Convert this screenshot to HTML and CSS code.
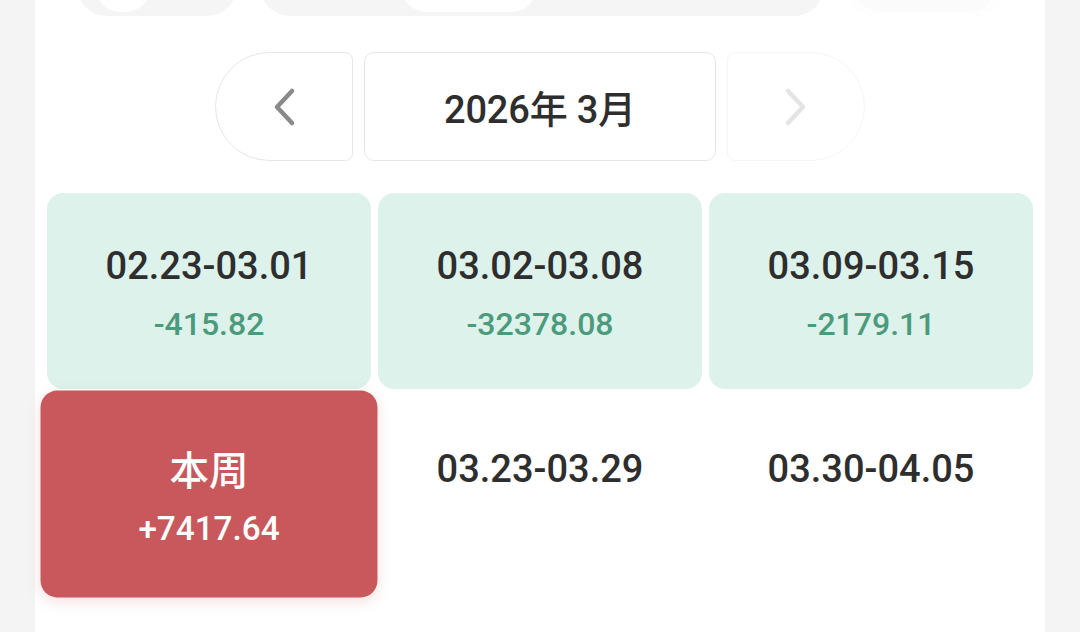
FILE: index.html
```html
<!DOCTYPE html>
<html lang="zh">
<head>
<meta charset="utf-8">
<title>周视图</title>
<link rel="stylesheet" href="styles.css">
</head>
<body>
<main class="panel">
  <div class="tabs">
    <div class="pill pill-a"><span class="knob knob-a"></span></div>
    <div class="pill pill-b"><span class="knob knob-b"></span></div>
    <div class="pill pill-c"><span class="knob knob-c"></span></div>
  </div>

  <div class="nav">
    <button class="nav-btn prev" aria-label="上个月">
      <svg width="28" height="40" viewBox="0 0 28 40"><polyline points="22,4 7,20 22,36" fill="none" stroke="#8a8a8a" stroke-width="4.5" stroke-linecap="round" stroke-linejoin="round"/></svg>
    </button>
    <div class="month">2026年 3月</div>
    <button class="nav-btn next" aria-label="下个月">
      <svg width="28" height="40" viewBox="0 0 28 40"><polyline points="6,4 21,20 6,36" fill="none" stroke="#e4e4e4" stroke-width="4.5" stroke-linecap="round" stroke-linejoin="round"/></svg>
    </button>
  </div>

  <div class="weeks">
    <div class="week past">
      <div class="range">02.23-03.01</div>
      <div class="amount">-415.82</div>
    </div>
    <div class="week past">
      <div class="range">03.02-03.08</div>
      <div class="amount">-32378.08</div>
    </div>
    <div class="week past">
      <div class="range">03.09-03.15</div>
      <div class="amount">-2179.11</div>
    </div>
    <div class="week current">
      <div class="range cn">本周</div>
      <div class="amount">+7417.64</div>
    </div>
    <div class="week">
      <div class="range">03.23-03.29</div>
    </div>
    <div class="week">
      <div class="range">03.30-04.05</div>
    </div>
  </div>
</main>
</body>
</html>
```

FILE: styles.css
```css
* { box-sizing: border-box; }
html, body { margin: 0; height: 100%; }
body {
  background: #f4f4f4;
  font-family: Roboto, "Noto Sans CJK SC", sans-serif;
  color: #2e2e2e;
  overflow: hidden;
}
.panel {
  display: flow-root;
  background: #ffffff;
  margin: 0 35px;
  height: 632px;
  padding: 0 12px;
}
.tabs {
  display: flex;
  justify-content: space-between;
  padding: 0 30px;
  margin-top: -44px;
  height: 60px;
}
.pill {
  height: 60px;
  border-radius: 30px;
  display: flex;
  align-items: flex-end;
}
.pill-a { width: 160px; background: #f5f5f5; }
.pill-b { width: 564px; background: #f5f5f5; }
.pill-c { width: 156px; background: #fefefe; box-shadow: 0 0 2px rgba(0,0,0,0.03); }
.knob { display: block; height: 52px; margin-bottom: 4px; border-radius: 26px; background: #ffffff; }
.knob-a { width: 56px; margin-left: 18px; }
.knob-b { width: 136px; margin-left: 141px; }
.knob-c { width: 140px; margin-left: 8px; background: #fbfbfb; }

.nav {
  display: flex;
  justify-content: center;
  gap: 11px;
  margin-top: 36px;
  height: 109px;
}
.nav-btn {
  width: 138px;
  height: 109px;
  background: #ffffff;
  border: 1px solid #e6e6e6;
  padding: 0;
  display: flex;
  align-items: center;
  justify-content: center;
  font: inherit;
}
.prev { border-radius: 55px 8px 8px 55px; }
.next { border-radius: 8px 55px 55px 8px; border-color: #f5f5f5; }
.month {
  width: 352px;
  border: 1px solid #e6e6e6;
  border-radius: 10px;
  display: flex;
  align-items: center;
  justify-content: center;
  font-size: 38px;
  font-weight: 500;
  color: #2e2e2e;
  letter-spacing: -0.2px;
}

.weeks {
  margin-top: 32px;
  display: grid;
  grid-template-columns: repeat(3, 1fr);
  gap: 7px;
}
.week {
  height: 196px;
  border-radius: 16px;
  padding-top: 50px;
  text-align: center;
}
.week.past { background: #dcf2ea; }
.week.current {
  background: #c8585b;
  color: #ffffff;
  transform: scale(1.04, 1.055);
  box-shadow: 0 4px 12px rgba(200, 88, 92, 0.18);
}
.range {
  font-size: 38px;
  line-height: 46px;
  font-weight: 500;
  color: #2e2e2e;
}
.current .range { color: #ffffff; }
.range.cn { font-size: 38px; font-family: "Noto Sans CJK SC", sans-serif; }
.amount {
  margin-top: 15px;
  font-size: 32px;
  line-height: 40px;
  font-weight: 500;
  color: #4c9a7c;
}
.current .amount { color: #ffffff; }
```
